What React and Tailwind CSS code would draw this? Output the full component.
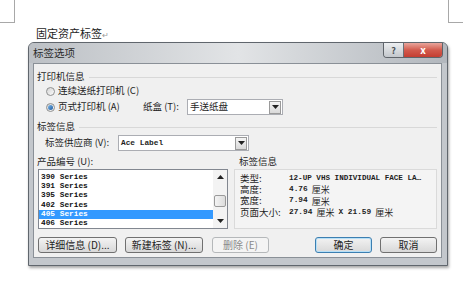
import React from "react";

const mono = "font-['Liberation_Mono',monospace]";

function Radio({ checked }) {
  return (
    <span className="flex h-[9px] w-[9px] items-center justify-center rounded-full border border-[#8e8f8f] bg-linear-to-br from-[#d4d4d4] to-[#fbfbfb]">
      {checked && (
        <span className="h-[5px] w-[5px] rounded-full bg-linear-to-br from-[#7cb8ec] to-[#1d5b9e]" />
      )}
    </span>
  );
}

function Arrow({ up = false }) {
  return (
    <svg width="7" height="4" viewBox="0 0 7 4">
      <path d={up ? "M0 4h7L3.5 0z" : "M0 0h7L3.5 4z"} fill="#222" />
    </svg>
  );
}

function Combo({ width, children }) {
  return (
    <div
      className={`flex h-[16px] items-center border border-[#abadb3] bg-white ${width}`}
    >
      <span className={`flex-1 pl-[2px] ${mono}`}>{children}</span>
      <span className="mr-px flex h-[13px] w-[12px] items-center justify-center border border-[#9a9a9a] bg-linear-to-b from-[#f5f5f5] to-[#d9d9d9]">
        <Arrow />
      </span>
    </div>
  );
}

function SectionHead({ children }) {
  return (
    <div className="flex h-[14px] items-center">
      <span className="text-[9.5px] leading-none">{children}</span>
      <span className="ml-[4px] mr-[4px] h-px flex-1 bg-[#d8d8d8]" />
    </div>
  );
}

function Btn({ children, className = "", variant }) {
  const look =
    variant === "default"
      ? "border-[#3c7fb1] shadow-[inset_0_0_0_1px_#b7e0f7] bg-linear-to-b from-[#f2f2f2] to-[#d9d9d9] text-[#1e1e1e]"
      : variant === "disabled"
        ? "border-[#b5b8ba] bg-[#f4f4f4] text-[#8a8a8a]"
        : "border-[#707070] bg-linear-to-b from-[#f3f3f3] to-[#d8d8d8] text-[#1e1e1e]";
  return (
    <div
      className={`flex h-[16px] items-center justify-center rounded-[3px] border text-[10px] leading-none ${look} ${className}`}
    >
      {children}
    </div>
  );
}

const series = ["390 Series", "391 Series", "395 Series", "402 Series", "405 Series", "406 Series"];

export default function App() {
  return (
    <div className="relative h-[286px] w-[463px] overflow-hidden bg-white font-['Noto_Sans_CJK_SC',sans-serif] text-[#1e1e1e]">
      {/* page corner marks */}
      <div className="absolute left-0 top-0 h-[23px] w-[15px] border-b border-r border-[#a8a8a8]" />
      <div className="absolute left-[448px] top-0 h-[23px] w-[15px] border-b border-l border-[#a8a8a8]" />

      <div className="h-[42px] pl-[36px] pt-[26px]">
        <p className="text-[11px] leading-[14px]">
          固定资产标签<span className="text-[8px] text-[#9a9a9a]">↵</span>
        </p>
      </div>

      {/* dialog */}
      <div className="ml-[28px] flex h-[224px] w-[420px] flex-col rounded-t-[6px] border border-[#60666d] bg-[#c3c7cc] shadow-[1px_2px_3px_rgba(0,0,0,0.35)]">
        <div className="flex h-[20px] items-start rounded-t-[5px] bg-linear-to-r from-[#bcc0c5] via-[#e2e4e6] to-[#b2b7bd]">
          <span className="self-center pl-[4px] text-[10.5px] leading-none text-[#2a2a2a]">
            标签选项
          </span>
          <div className="ml-auto mr-[4px] flex h-[15px] overflow-hidden rounded-b-[4px] border border-t-0 border-[#5f646a]">
            <span className="flex w-[20px] items-center justify-center border-r border-[#6b7076] bg-linear-to-b from-[#eceef0] to-[#c3c7cc] text-[9px] font-bold leading-none text-[#4a4f55]">
              ?
            </span>
            <span className="flex w-[38px] items-center justify-center bg-linear-to-b from-[#e8a59c] via-[#d25a4d] to-[#c43d31] text-[10px] font-bold leading-none text-white">
              x
            </span>
          </div>
        </div>

        <div className="ml-[4px] mr-[5px] flex h-[195px] flex-col border border-[#8a9097] bg-[#f0f0f0] pl-[3px]">
          <div className="mt-[6px]">
            <SectionHead>打印机信息</SectionHead>
          </div>

          <div className="flex h-[14px] items-center pl-[9px] text-[9.5px] leading-none">
            <Radio />
            <span className="ml-[3px]">连续送纸打印机 (C)</span>
          </div>

          <div className="mt-px flex h-[16px] items-center text-[9.5px] leading-none">
            <div className="flex w-[106px] items-center pl-[9px]">
              <Radio checked />
              <span className="ml-[3px]">页式打印机 (A)</span>
            </div>
            <span className="w-[44px]">纸盒 (T):</span>
            <Combo width="w-[96px]">
              <span className="font-['Noto_Sans_CJK_SC',sans-serif] text-[9.5px]">手送纸盘</span>
            </Combo>
          </div>

          <div className="mt-[5px]">
            <SectionHead>标签信息</SectionHead>
          </div>

          <div className="mt-px flex h-[16px] items-center pl-[8px] text-[9.5px] leading-none">
            <span className="w-[73px]">标签供应商 (V):</span>
            <Combo width="w-[131px]">
              <span className="text-[7.8px] font-bold">Ace Label</span>
            </Combo>
          </div>

          <div className="mt-[4px] flex h-[14px] items-center text-[9.5px] leading-none">
            <span className="w-[198px]">产品编号 (U):</span>
            <span className="pl-[4px]">标签信息</span>
          </div>

          <div className="flex h-[60px]">
            <div className="ml-px flex w-[190px] border border-[#828790] bg-white">
              <div className={`flex-1 overflow-hidden pt-[3px] text-[7.8px] font-bold ${mono}`}>
                {series.map((s) => (
                  <div
                    key={s}
                    className={`flex h-[9.3px] items-center pl-[2px] ${
                      s === "405 Series" ? "bg-[#3399ff] text-white" : "text-[#111]"
                    }`}
                  >
                    {s}
                  </div>
                ))}
              </div>
              <div className="flex w-[14px] flex-col bg-[#f3f3f3]">
                <div className="flex h-[14px] items-center justify-center">
                  <Arrow up />
                </div>
                <div className="h-[11px]" />
                <div className="mx-px h-[12px] rounded-[2px] border border-[#9a9a9a] bg-linear-to-r from-[#f4f4f4] to-[#dcdcdc]" />
                <div className="flex-1" />
                <div className="flex h-[14px] items-center justify-center">
                  <Arrow />
                </div>
              </div>
            </div>

            <div className="ml-[6px] w-[203px] border border-[#dadada] bg-[#f4f4f4] pl-[5px] pt-[3px] text-[9.5px] leading-none">
              <div className="flex h-[11.3px] items-center">
                <span className="w-[49px]">类型:</span>
                <span className={`text-[7.6px] font-bold ${mono}`}>
                  12-UP VHS INDIVIDUAL FACE LA…
                </span>
              </div>
              <div className="flex h-[11.3px] items-center">
                <span className="w-[49px]">高度:</span>
                <span className={`text-[7.8px] font-bold ${mono}`}>4.76</span>
                <span className="ml-[4px] text-[9px]">厘米</span>
              </div>
              <div className="flex h-[11.3px] items-center">
                <span className="w-[49px]">宽度:</span>
                <span className={`text-[7.8px] font-bold ${mono}`}>7.94</span>
                <span className="ml-[4px] text-[9px]">厘米</span>
              </div>
              <div className="flex h-[11.3px] items-center">
                <span className="w-[49px]">页面大小:</span>
                <span className={`text-[7.8px] font-bold ${mono}`}>27.94</span>
                <span className="ml-[4px] text-[9px]">厘米</span>
                <span className={`ml-[4px] text-[7.8px] font-bold ${mono}`}>X 21.59</span>
                <span className="ml-[4px] text-[9px]">厘米</span>
              </div>
            </div>
          </div>

          <div className="mt-[8px] flex h-[16px] items-center">
            <Btn className="ml-px w-[79px]">详细信息 (D)...</Btn>
            <Btn className="ml-[8px] w-[78px]">新建标签 (N)...</Btn>
            <Btn className="ml-[9px] w-[57px]" variant="disabled">
              删除 (E)
            </Btn>
            <Btn className="ml-[46px] w-[57px]" variant="default">
              确定
            </Btn>
            <Btn className="ml-[8px] w-[57px]">取消</Btn>
          </div>
        </div>
      </div>
    </div>
  );
}
